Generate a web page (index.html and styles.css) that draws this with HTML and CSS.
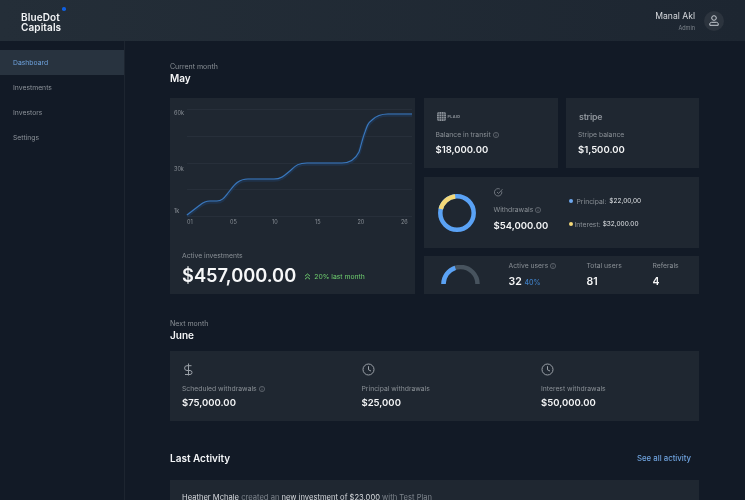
FILE: index.html
```html
<!DOCTYPE html>
<html lang="en">
<head>
<meta charset="utf-8">
<title>BlueDot Capitals</title>
<link rel="stylesheet" href="styles.css">
</head>
<body>
<header class="topbar">
  <div class="logo"><span>BlueDot<br>Capitals</span><i class="logo-dot"></i></div>
  <div class="user">
    <div class="user-text"><div class="user-name">Manal Akl</div><div class="user-role">Admin</div></div>
    <div class="avatar"><svg width="10" height="11" viewBox="0 0 10 11" fill="none" stroke="#c9ced4" stroke-width="1"><circle cx="5" cy="3" r="2.300"/><path d="M.8 10.300V9C.8 8 1.600 7.300 2.600 7.300h4.800c1 0 1.800 .7 1.800 1.700v1.300z"/></svg></div>
  </div>
</header>
<div class="shell">
  <nav class="sidebar">
    <a class="nav-item active">Dashboard</a>
    <a class="nav-item">Investments</a>
    <a class="nav-item">Investors</a>
    <a class="nav-item">Settings</a>
  </nav>
  <main class="main">
    <div class="eyebrow">Current month</div>
    <h2 class="month">May</h2>
    <section class="may-grid">
      <div class="card chart-card">
        <svg class="chart" width="245" height="132" viewBox="0 0 245 132">
          <g stroke="#272f3a" stroke-width="1">
            <path d="M17 11.500H242M17 38.500H242M17 65.500H242M17 91.500H242M17 118.500H242"/>
          </g>
          <g class="axis">
            <text x="4" y="17">60k</text><text x="4" y="73">30k</text><text x="4" y="115">1k</text>
            <text x="17" y="126">01</text><text x="60" y="126">05</text><text x="102" y="126">10</text><text x="145" y="126">15</text><text x="187.500" y="126">20</text><text x="231" y="126">26</text>
          </g>
          <path d="M17 118 L30 108 C33 105.500 35 104 40 104 L47 104 C52 104 54 101 58 96 C63 90 67 82 78 82 L104 82 C112 82 116 77 121 73 C126 68 129 66 137 66 L172 66 C180 66 185 63 189 55 C190 53 192 43 195 35 C197 29 198 26 202 23 C206 19 210 17 218 17 L242 17" fill="none" stroke="#1f3a5c" stroke-width="3.500" opacity=".6"/>
          <path d="M17 117 L30 107 C33 104.500 35 103 40 103 L47 103 C52 103 54 100 58 95 C63 89 67 81 78 81 L104 81 C112 81 116 76 121 72 C126 67 129 65 137 65 L172 65 C180 65 185 62 189 54 C190 52 192 42 195 34 C197 28 198 25 202 22 C206 18 210 16 218 16 L242 16" fill="none" stroke="#3a78bd" stroke-width="1.100"/>
        </svg>
        <div class="chart-foot">
          <div class="label">Active investments</div>
          <div class="big-row">
            <span class="big-value">$457,000.00</span>
            <span class="trend"><svg width="7" height="7" viewBox="0 0 7 7" fill="none" stroke="#6fcf6f" stroke-width="1"><path d="M1 3.200 3.500 1 6 3.200M1 6.200 3.500 4 6 6.200"/></svg>20% last month</span>
          </div>
        </div>
      </div>
      <div class="card balance plaid">
        <div class="brand"><svg width="9" height="9" viewBox="0 0 9 9"><rect width="9" height="9" rx="2" fill="#8e949b"/><path d="M2.250 0V9M4.500 0V9M6.750 0V9M0 2.250H9M0 4.500H9M0 6.750H9" stroke="#1f2731" stroke-width=".5"/></svg><span class="plaid-word">PLAID</span></div>
        <div class="label">Balance in transit <svg class="info" viewBox="0 0 6 6"><circle cx="3" cy="3" r="2.600"/><path d="M3 2.600V4.500M3 1.400V2"/></svg></div>
        <div class="value">$18,000.00</div>
      </div>
      <div class="card balance stripe">
        <div class="brand"><span class="stripe-word">stripe</span></div>
        <div class="label">Stripe balance</div>
        <div class="value">$1,500.00</div>
      </div>
      <div class="card withdrawals">
        <svg class="donut" width="38" height="38" viewBox="0 0 38 38" fill="none" stroke-width="4.500"><circle cx="19" cy="19" r="16.700" stroke="#5aa2f5"/><path d="M2.800 15A16.700 16.700 0 0 1 17.200 2.400" stroke="#f5d978"/></svg>
        <div class="w-main">
          <svg class="check" width="9" height="9" viewBox="0 0 9 9" fill="none" stroke="#8e949b" stroke-width=".7"><path d="M7.700 3.300A3.700 3.700 0 1 1 5.800 1"/><path d="M3 4 4.500 5.500 8.500 1.200"/></svg>
          <div class="label">Withdrawals <svg class="info" viewBox="0 0 6 6"><circle cx="3" cy="3" r="2.600"/><path d="M3 2.600V4.500M3 1.400V2"/></svg></div>
          <div class="value">$54,000.00</div>
        </div>
        <div class="legend">
          <div class="legend-row first"><i class="dot blue"></i><span class="label">Principal:</span><span class="legend-val">$22,00,00</span></div>
          <div class="legend-row"><i class="dot yellow"></i><span class="label">Interest:</span><span class="legend-val">$32,000.00</span></div>
        </div>
      </div>
      <div class="card users">
        <svg class="gauge" width="39" height="19" viewBox="0 0 39 19" fill="none" stroke-width="4.500"><path d="M2.500 19A17 17 0 0 1 36.500 19" stroke="#47535e"/><path d="M2.500 19A17 17 0 0 1 14.300 2.800" stroke="#5aa2f5"/></svg>
        <div class="stat s1"><div class="label">Active users <svg class="info" viewBox="0 0 6 6"><circle cx="3" cy="3" r="2.600"/><path d="M3 2.600V4.500M3 1.400V2"/></svg></div><div class="value">32 <span class="pct">40%</span></div></div>
        <div class="stat s2"><div class="label">Total users</div><div class="value">81</div></div>
        <div class="stat s3"><div class="label">Referals</div><div class="value">4</div></div>
      </div>
    </section>
    <div class="eyebrow next">Next month</div>
    <h2 class="month">June</h2>
    <section class="card june">
      <div class="june-col">
        <svg class="june-icon" width="13" height="13" viewBox="0 0 13 13" fill="none" stroke="#9aa0a7" stroke-width="1"><path d="M6.500 .5V12.500M9.500 2.700H5a2 2 0 0 0 0 4.800h3a2 2 0 0 1 0 4H3"/></svg>
        <div class="label">Scheduled withdrawals <svg class="info" viewBox="0 0 6 6"><circle cx="3" cy="3" r="2.600"/><path d="M3 2.600V4.500M3 1.400V2"/></svg></div>
        <div class="value">$75,000.00</div>
      </div>
      <div class="june-col">
        <svg class="june-icon" width="13" height="13" viewBox="0 0 13 13" fill="none" stroke="#9aa0a7" stroke-width="1"><circle cx="6.500" cy="6.500" r="5.500"/><path d="M6.500 3.200V6.800L9 8"/></svg>
        <div class="label">Principal withdrawals</div>
        <div class="value">$25,000</div>
      </div>
      <div class="june-col">
        <svg class="june-icon" width="13" height="13" viewBox="0 0 13 13" fill="none" stroke="#9aa0a7" stroke-width="1"><circle cx="6.500" cy="6.500" r="5.500"/><path d="M6.500 3.200V6.800L9 8"/></svg>
        <div class="label">Interest withdrawals</div>
        <div class="value">$50,000.00</div>
      </div>
    </section>
    <div class="activity-head"><h2 class="activity-title">Last Activity</h2><a class="see-all">See all activity</a></div>
    <section class="card activity"><strong>Heather Mchale</strong> created an <strong>new investment of $23,000</strong> with Test Plan</section>
  </main>
</div>
</body>
</html>
```
FILE: styles.css
```css
* { box-sizing: border-box; }
html, body { margin: 0; height: 500px; overflow: hidden; }
body { background: #121a26; font-family: Inter, "Liberation Sans", sans-serif; color: #fff; }
.topbar, .shell { will-change: transform; }
.topbar { height: 41px; display: flex; justify-content: space-between; align-items: center; padding: 0 21px 0 21px; background: linear-gradient(90deg, #242e38, #1d2631); }
.logo { position: relative; margin-top: 3px; font-size: 10px; letter-spacing: .1px; line-height: 10px; font-weight: 600; color: #f2f4f6; }
.logo-dot { position: absolute; left: 41px; top: -5px; width: 3.500px; height: 3.500px; border-radius: 50%; background: #0f5fe0; }
.user { display: flex; align-items: center; gap: 9px; }
.user-text { text-align: right; }
.user-name { margin-top: 1px; font-size: 8.600px; line-height: 11px; color: #d7dade; }
.user-role { font-size: 5.500px; line-height: 8px; margin-top: 2px; color: #7d848c; }
.avatar { width: 20px; height: 20px; border-radius: 50%; background: #2c343e; display: flex; align-items: center; justify-content: center; }
.shell { display: flex; height: 459px; }
.sidebar { width: 125px; flex: none; padding-top: 9px; border-right: 1px solid #1d2530; }
.nav-item { display: flex; align-items: center; height: 25.200px; padding: 0 0 1px 13px; font-size: 6.800px; color: #8b9198; }
.nav-item.active { color: #6ea2dd; background: #28333f; }
.main { flex: none; width: 620px; padding: 21px 46px 0 45px; }
.eyebrow { font-size: 7px; line-height: 9px; color: #8a9096; }
.month { margin: 1px 0 0; font-size: 10px; line-height: 13px; font-weight: 600; color: #f4f5f6; }
.may-grid { display: grid; grid-template-columns: 245px 134px 133px; grid-template-rows: 70px 71px 38px; gap: 8.500px; margin-top: 13px; }
.card { background: #1f2731; }
.chart-card { grid-row: 1 / span 3; display: flex; flex-direction: column; }
.chart { display: block; flex: none; }
.axis text { font-size: 5.500px; fill: #8a9097; font-family: Inter, "Liberation Sans", sans-serif; }
.chart-foot { padding: 21px 0 0 12px; }
.label { font-size: 6.800px; line-height: 9px; color: #8a9096; white-space: nowrap; }
.value { font-size: 9.500px; line-height: 13px; font-weight: 600; color: #f4f5f6; white-space: nowrap; }
.big-row { display: flex; align-items: center; margin-top: 2px; gap: 8px; }
.big-value { font-size: 18.300px; line-height: 26px; font-weight: 600; color: #f7f8f9; }
.trend { display: flex; align-items: center; gap: 3px; margin-top: 3px; font-size: 6.800px; color: #6fcf6f; }
.info { width: 6px; height: 6px; fill: none; stroke: #848a91; stroke-width: .55; vertical-align: -1px; }
.balance { padding: 14px 12px 0; }
.balance .label { margin-top: 9px; }
.balance .value { margin-top: 4px; }
.brand { height: 9px; display: flex; align-items: center; gap: 2px; padding-left: 1px; }
.plaid-word { font-size: 3.800px; font-weight: 700; letter-spacing: .3px; color: #8e949b; }
.stripe-word { font-size: 8.800px; font-weight: 600; letter-spacing: -.2px; color: #8e949b; }
.withdrawals { grid-column: 2 / span 2; display: flex; align-items: flex-start; padding: 17px 0 0 14px; }
.donut { flex: none; }
.w-main { margin-left: 18px; margin-top: -6px; width: 75px; }
.check { display: block; }
.w-main .label { margin-top: 8px; }
.w-main .value { margin-top: 5px; }
.legend { padding-top: 3px; }
.legend-row { display: flex; align-items: center; gap: 2px; height: 9px; }
.legend-row + .legend-row { margin-top: 14px; }
.first .label { margin-left: 2px; }
.first .legend-val { margin-left: 1px; }
.dot { width: 4px; height: 4px; border-radius: 50%; }
.dot.blue { background: #6ea8f0; }
.dot.yellow { background: #f5d978; }
.legend-val { font-size: 6.500px; color: #dfe2e5; }
.users { grid-column: 2 / span 2; display: flex; align-items: flex-start; padding: 5px 0 0 17px; }
.gauge { flex: none; margin-top: 4px; }
.stat { flex: none; }
.stat .value { margin-top: 5px; font-size: 10.500px; }
.s1 { margin-left: 29px; width: 78px; }
.s2 { width: 66px; }
.pct { font-size: 7px; font-weight: 500; color: #3f7fc4; }
.june { margin-top: 9px; height: 70px; display: grid; grid-template-columns: 179.500px 179.500px 1fr; padding: 12px 12px 0; }
.next { margin-top: 25px; }
.june-icon { display: block; }
.june-col .label { margin-top: 8px; }
.june-col .value { margin-top: 3px; }
.activity-head { display: flex; justify-content: space-between; align-items: center; margin-top: 30px; padding-right: 8px; }
.activity-title { margin: 0; font-size: 10px; line-height: 14px; font-weight: 600; color: #f2f4f6; }
.see-all { font-size: 7.800px; font-weight: 500; color: #6ea2dd; }
.activity { margin-top: 15px; height: 60px; padding: 13px 12px; font-size: 7.600px; color: #7d848c; white-space: nowrap; }
.activity strong { font-weight: 400; color: #d7dade; }
```
